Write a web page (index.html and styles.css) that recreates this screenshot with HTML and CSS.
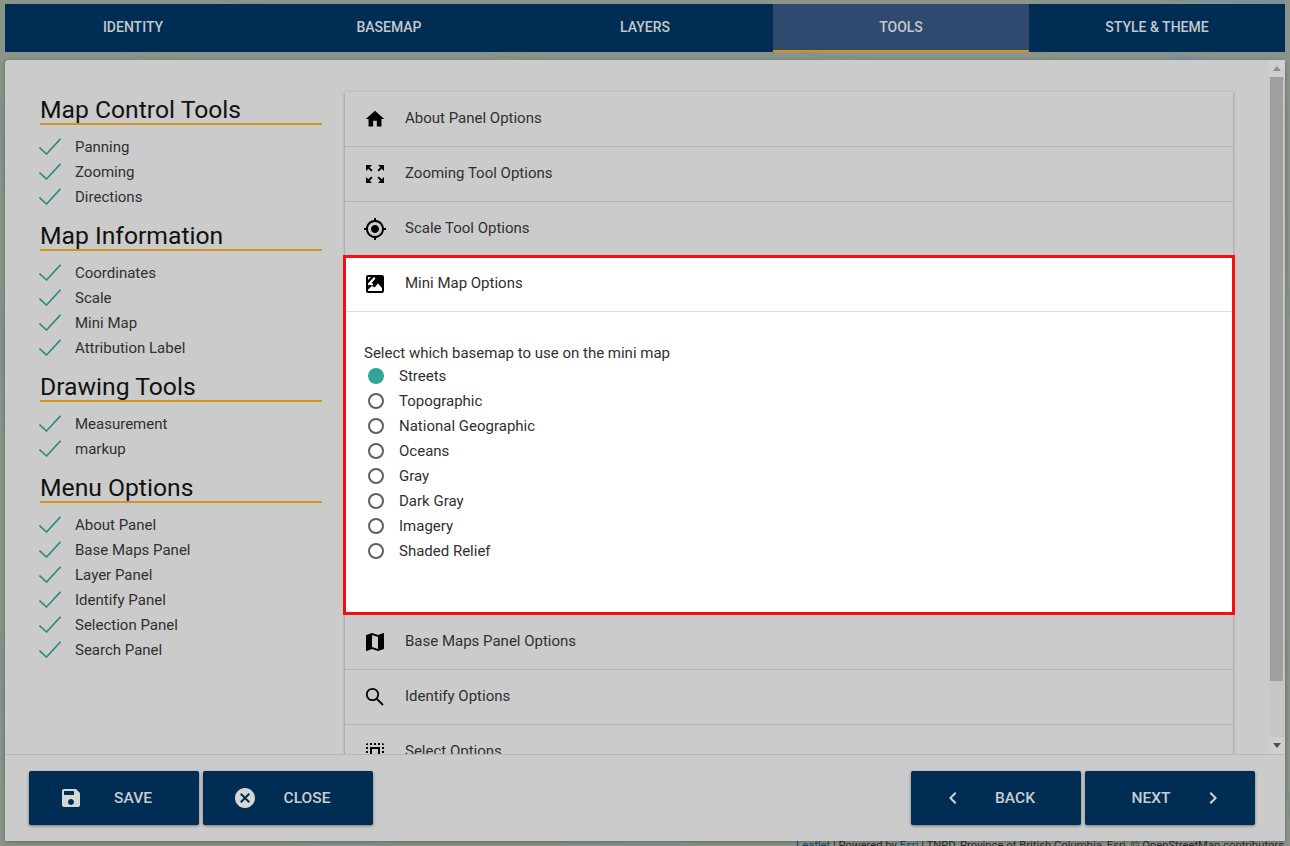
FILE: index.html
```html
<!DOCTYPE html>
<html lang="en">
<head>
  <meta charset="UTF-8">
  <meta name="viewport" content="width=device-width, initial-scale=1.0">
  <title>Map Wizard - Tools</title>
  <link rel="stylesheet" href="styles.css">
</head>
<body>
  <svg class="map-bg" viewBox="0 0 1290 846" aria-hidden="true">
    <g fill="none" stroke="#76928f" stroke-width="1">
      <path d="M0 95 C3 120 1 150 4 190"/>
      <path d="M0 290 C4 330 1 380 4 430"/>
      <path d="M0 630 C3 680 2 720 4 780"/>
      <path d="M220 0 C240 5 255 2 270 4"/>
      <path d="M120 52 C140 60 160 55 180 60"/>
      <path d="M480 52 C500 60 520 54 545 60"/>
      <path d="M800 52 C825 60 850 54 880 60"/>
      <path d="M1045 52 L1060 60"/>
      <path d="M1286 100 C1288 180 1285 260 1290 320"/>
      <path d="M1286 640 C1288 700 1285 760 1290 820"/>
      <path d="M300 842 C330 845 360 841 390 846"/>
      <path d="M560 842 C600 846 640 842 690 846"/>
    </g>
    <path d="M1160 0 C1200 3 1240 2 1285 4 L1285 0Z" fill="#7d8f9a"/>
    <path d="M1170 52 C1185 57 1200 56 1215 60 L1170 60Z" fill="#7d929c"/>
  </svg>

  <p class="attribution"><a>Leaflet</a> | Powered by <a>Esri</a> | TNRD, Province of British Columbia, Esri, © OpenStreetMap contributors</p>

  <div class="wizard">
    <nav class="tabs">
      <div class="tab">Identity</div>
      <div class="tab">Basemap</div>
      <div class="tab">Layers</div>
      <div class="tab active">Tools</div>
      <div class="tab">Style &amp; Theme</div>
    </nav>

    <div class="dialog">
      <div class="dialog-body">
        <div class="dialog-scroll">
          <aside class="summary">
            <h2>Map Control Tools</h2>
            <ul>
              <li><svg class="check" viewBox="0 0 22 17"><path d="M0.5 9.5 L7.5 16 L21.5 0.8"/></svg>Panning</li>
              <li><svg class="check" viewBox="0 0 22 17"><path d="M0.5 9.5 L7.5 16 L21.5 0.8"/></svg>Zooming</li>
              <li><svg class="check" viewBox="0 0 22 17"><path d="M0.5 9.5 L7.5 16 L21.5 0.8"/></svg>Directions</li>
            </ul>
            <h2>Map Information</h2>
            <ul>
              <li><svg class="check" viewBox="0 0 22 17"><path d="M0.5 9.5 L7.5 16 L21.5 0.8"/></svg>Coordinates</li>
              <li><svg class="check" viewBox="0 0 22 17"><path d="M0.5 9.5 L7.5 16 L21.5 0.8"/></svg>Scale</li>
              <li><svg class="check" viewBox="0 0 22 17"><path d="M0.5 9.5 L7.5 16 L21.5 0.8"/></svg>Mini Map</li>
              <li><svg class="check" viewBox="0 0 22 17"><path d="M0.5 9.5 L7.5 16 L21.5 0.8"/></svg>Attribution Label</li>
            </ul>
            <h2>Drawing Tools</h2>
            <ul>
              <li><svg class="check" viewBox="0 0 22 17"><path d="M0.5 9.5 L7.5 16 L21.5 0.8"/></svg>Measurement</li>
              <li><svg class="check" viewBox="0 0 22 17"><path d="M0.5 9.5 L7.5 16 L21.5 0.8"/></svg>markup</li>
            </ul>
            <h2>Menu Options</h2>
            <ul>
              <li><svg class="check" viewBox="0 0 22 17"><path d="M0.5 9.5 L7.5 16 L21.5 0.8"/></svg>About Panel</li>
              <li><svg class="check" viewBox="0 0 22 17"><path d="M0.5 9.5 L7.5 16 L21.5 0.8"/></svg>Base Maps Panel</li>
              <li><svg class="check" viewBox="0 0 22 17"><path d="M0.5 9.5 L7.5 16 L21.5 0.8"/></svg>Layer Panel</li>
              <li><svg class="check" viewBox="0 0 22 17"><path d="M0.5 9.5 L7.5 16 L21.5 0.8"/></svg>Identify Panel</li>
              <li><svg class="check" viewBox="0 0 22 17"><path d="M0.5 9.5 L7.5 16 L21.5 0.8"/></svg>Selection Panel</li>
              <li><svg class="check" viewBox="0 0 22 17"><path d="M0.5 9.5 L7.5 16 L21.5 0.8"/></svg>Search Panel</li>
            </ul>
          </aside>

          <section class="panels">
            <div class="panel">
              <div class="panel-head">
                <svg class="icon" viewBox="-1 -1 26 26"><path d="M10 20v-6h4v6h5v-8h3L12 3 2 12h3v8z"/></svg>
                About Panel Options
              </div>
            </div>
            <div class="panel">
              <div class="panel-head">
                <svg class="icon" viewBox="0 0 24 24"><path d="M15 3l2.3 2.3-2.89 2.87 1.42 1.42L18.7 6.7 21 9V3zM3 9l2.3-2.3 2.87 2.89 1.42-1.42L6.7 5.3 9 3H3zm6 12l-2.3-2.3 2.89-2.87-1.42-1.42L5.3 17.3 3 15v6zm12-6l-2.3 2.3-2.87-2.89-1.42 1.42 2.89 2.87L15 21h6z"/></svg>
                Zooming Tool Options
              </div>
            </div>
            <div class="panel">
              <div class="panel-head">
                <svg class="icon" viewBox="0 0 24 24"><path d="M12 8c-2.21 0-4 1.79-4 4s1.79 4 4 4 4-1.79 4-4-1.79-4-4-4zm8.94 3c-.46-4.17-3.77-7.48-7.94-7.94V1h-2v2.06C6.83 3.52 3.52 6.83 3.06 11H1v2h2.06c.46 4.17 3.77 7.48 7.94 7.94V23h2v-2.06c4.17-.46 7.48-3.77 7.94-7.94H23v-2h-2.06zM12 19c-3.87 0-7-3.13-7-7s3.13-7 7-7 7 3.13 7 7-3.13 7-7 7z"/></svg>
                Scale Tool Options
              </div>
            </div>

            <div class="panel open">
              <div class="panel-head">
                <svg class="icon" viewBox="0 0 24 24"><path d="M5 3h14c1.100 0 2 .9 2 2v14c0 1.100-.9 2-2 2H5c-1.100 0-2-.9-2-2V5c0-1.100.9-2 2-2z"/><path fill="#fff" d="M5 5h3L5 8zM5 11.500L11 5l1.500 1.500L8.500 11l2 1-1 1.500L6 12.800 5 13.800zM5 19v-1.500l4-3.500 2.500 1.500L15 11.500l4 4.500v3z"/></svg>
                Mini Map Options
              </div>
              <div class="panel-content">
                <p class="field-label">Select which basemap to use on the mini map</p>
                <div class="radio selected"><span class="dot"></span>Streets</div>
                <div class="radio"><span class="dot"></span>Topographic</div>
                <div class="radio"><span class="dot"></span>National Geographic</div>
                <div class="radio"><span class="dot"></span>Oceans</div>
                <div class="radio"><span class="dot"></span>Gray</div>
                <div class="radio"><span class="dot"></span>Dark Gray</div>
                <div class="radio"><span class="dot"></span>Imagery</div>
                <div class="radio"><span class="dot"></span>Shaded Relief</div>
              </div>
            </div>

            <div class="panel">
              <div class="panel-head">
                <svg class="icon" viewBox="0 0 24 24"><path d="M20.500 3l-.16.03L15 5.100 9 3 3.360 4.900c-.21.07-.36.25-.36.48V20.500c0 .28.22.5.5.5l.16-.03L9 18.900l6 2.100 5.640-1.900c.21-.07.36-.25.36-.48V3.500c0-.28-.22-.5-.5-.5zM15 19l-6-2.110V5l6 2.110V19z"/></svg>
                Base Maps Panel Options
              </div>
            </div>
            <div class="panel">
              <div class="panel-head">
                <svg class="icon search" viewBox="0 0 24 24"><circle cx="9.500" cy="9.500" r="5.700"/><path d="M13.800 13.800L20 20"/></svg>
                Identify Options
              </div>
            </div>
            <div class="panel">
              <div class="panel-head">
                <svg class="icon" viewBox="0 0 24 24"><path d="M3 5h2V3c-1.100 0-2 .9-2 2zm0 8h2v-2H3v2zm4 8h2v-2H7v2zM3 9h2V7H3v2zm10-6h-2v2h2V3zm6 0v2h2c0-1.100-.9-2-2-2zM5 21v-2H3c0 1.100.9 2 2 2zm-2-4h2v-2H3v2zM9 3H7v2h2V3zm2 18h2v-2h-2v2zm8-8h2v-2h-2v2zm0 8c1.100 0 2-.9 2-2h-2v2zm0-12h2V7h-2v2zm0 8h2v-2h-2v2zm-4 4h2v-2h-2v2zm0-16h2V3h-2v2zM7 17h10V7H7v10zm2-8h6v6H9V9z"/></svg>
                Select Options
              </div>
            </div>
          </section>
        </div>

        <div class="scrollbar">
          <span class="arrow up"></span>
          <div class="scroll-track"><div class="scroll-thumb"></div></div>
          <span class="arrow down"></span>
        </div>
      </div>

      <footer class="dialog-foot">
        <div class="btn-group">
          <button class="btn">
            <svg class="btn-icon" viewBox="0 0 24 24"><path d="M17 3H5c-1.110 0-2 .9-2 2v14c0 1.100.89 2 2 2h14c1.100 0 2-.9 2-2V7l-4-4zm-5 16c-1.660 0-3-1.340-3-3s1.340-3 3-3 3 1.340 3 3-1.340 3-3 3zm3-10H5V5h10v4z"/></svg>
            <span class="btn-text">Save</span>
          </button>
          <button class="btn">
            <svg class="btn-icon" viewBox="0 0 24 24"><path d="M12 2C6.470 2 2 6.470 2 12s4.470 10 10 10 10-4.470 10-10S17.530 2 12 2zm5 13.590L15.590 17 12 13.410 8.410 17 7 15.590 10.590 12 7 8.410 8.410 7 12 10.590 15.590 7 17 8.410 13.410 12 17 15.590z"/></svg>
            <span class="btn-text">Close</span>
          </button>
        </div>
        <div class="btn-group">
          <button class="btn">
            <svg class="btn-icon" viewBox="0 0 24 24"><path d="M15.410 7.410L14 6l-6 6 6 6 1.410-1.410L10.830 12z"/></svg>
            <span class="btn-text">Back</span>
          </button>
          <button class="btn reverse">
            <svg class="btn-icon" viewBox="0 0 24 24"><path d="M10 6L8.590 7.410 13.170 12l-4.580 4.590L10 18l6-6z"/></svg>
            <span class="btn-text">Next</span>
          </button>
        </div>
      </footer>
    </div>
  </div>
</body>
</html>
```

FILE: styles.css
```css
html, body {
  height: 100%;
}
body {
  margin: 0;
  overflow: hidden;
  position: relative;
  background-color: #8b9488;
  font-family: Roboto, "Liberation Sans", sans-serif;
  font-size: 15px;
  color: #303030;
}

.map-bg {
  position: absolute;
  top: 0;
  left: 0;
  width: 1290px;
  height: 846px;
}
.attribution {
  position: absolute;
  right: 6px;
  top: 839px;
  margin: 0;
  font-size: 11.25px;
  line-height: 14px;
  white-space: nowrap;
  color: #2b2b2b;
}
.attribution a {
  color: #0a4a70;
}

.wizard {
  position: relative;
  display: flex;
  flex-direction: column;
  gap: 8px;
  height: 837px;
  padding: 4px 5px 0;
}

/* top tabs */
.tabs {
  display: flex;
  flex: none;
  height: 48px;
  background: #002d53;
}
.tab {
  flex: 1;
  display: flex;
  align-items: center;
  justify-content: center;
  padding-bottom: 2px;
  font-size: 14px;
  font-weight: 500;
  text-transform: uppercase;
  color: #c4c9ce;
}
.tab.active {
  background: #30496f;
  box-shadow: inset 0 -2px 0 #d3921f;
}

/* dialog */
.dialog {
  flex: 1;
  min-height: 0;
  display: flex;
  flex-direction: column;
  background: #cbcbcb;
  border-radius: 4px 4px 0 0;
  box-shadow: 0 1px 4px rgba(0, 0, 0, 0.3);
}
.dialog-body {
  flex: 1;
  min-height: 0;
  display: flex;
}
.dialog-scroll {
  flex: 1;
  min-width: 0;
  display: flex;
  align-items: flex-start;
  gap: 23px;
  padding: 32px 36px 0 35px;
  overflow: hidden;
}

/* left summary */
.summary {
  flex: none;
  width: 282px;
}
.summary h2 {
  margin: 0 0 9px;
  padding-top: 4px;
  height: 27px;
  line-height: 28px;
  font-size: 24.7px;
  font-weight: 400;
  color: #111;
  border-bottom: 2px solid #d3921f;
  box-sizing: content-box;
}
.summary ul {
  list-style: none;
  margin: 0 0 9px;
  padding: 0;
}
.summary li {
  display: flex;
  align-items: center;
  height: 25px;
}
.check {
  flex: none;
  width: 22px;
  height: 17px;
  margin: 0 14px 0 -1px;
}
.check path {
  fill: none;
  stroke: #2a8a80;
  stroke-width: 1.6;
}

/* accordion */
.panels {
  flex: 1;
  min-width: 0;
  box-shadow: 0 1px 3px rgba(0, 0, 0, 0.35);
}
.panel {
  border-bottom: 1px solid #b4b4b4;
}
.panel-head {
  display: flex;
  align-items: center;
  gap: 18px;
  height: 54px;
  box-sizing: border-box;
  padding: 0 18px 2px;
}
.icon {
  flex: none;
  width: 24px;
  height: 24px;
  margin-top: 2px;
  fill: #000;
}
.icon.search {
  fill: none;
  stroke: #000;
  stroke-width: 1.8;
}
.panel.open {
  position: relative;
  margin-bottom: 2px;
  background: #fff;
  border-bottom: 0;
  outline: 3px solid #f5100f;
  outline-offset: -1px;
}
.panel.open .panel-head {
  height: 55px;
  border-bottom: 1px solid #dcdcdc;
}
.panel-content {
  height: 301px;
  padding: 32px 19px 0;
  box-sizing: border-box;
}
.field-label {
  margin: 0;
  height: 19px;
  line-height: 19px;
}
.radio {
  display: flex;
  align-items: center;
  height: 25px;
  gap: 15px;
}
.dot {
  flex: none;
  width: 16px;
  height: 16px;
  margin-left: 4px;
  border: 2px solid #5f5f5f;
  border-radius: 50%;
  box-sizing: border-box;
}
.radio.selected .dot {
  background: #30a597;
  border-color: #30a597;
}

/* fake scrollbar */
.scrollbar {
  flex: none;
  width: 16px;
  display: flex;
  flex-direction: column;
  align-items: center;
  background: #cfcfcf;
}
.arrow {
  flex: none;
  width: 0;
  height: 0;
  margin: 6px 0;
  border-left: 4px solid transparent;
  border-right: 4px solid transparent;
}
.arrow.up {
  border-bottom: 5px solid #8f8f8f;
}
.arrow.down {
  border-top: 5px solid #505050;
}
.scroll-track {
  flex: 1;
  width: 100%;
  background: #c6c6c6;
}
.scroll-thumb {
  width: 13px;
  height: 604px;
  margin-left: 1px;
  background: #a0a0a0;
}

/* footer buttons */
.dialog-foot {
  flex: none;
  height: 87px;
  box-sizing: border-box;
  display: flex;
  justify-content: space-between;
  padding: 16px 30px 16px 24px;
  border-top: 1px solid #b8b8b8;
}
.btn-group {
  display: flex;
  gap: 4px;
}
.btn {
  display: flex;
  align-items: center;
  width: 170px;
  height: 54px;
  padding: 0 16px 0 30px;
  border: 0;
  border-radius: 2px;
  background: #002d53;
  color: #c9cdd1;
  font-family: inherit;
  font-size: 15.5px;
  font-weight: 500;
  text-transform: uppercase;
  box-shadow: 0 1px 3px rgba(0, 0, 0, 0.45);
}
.btn.reverse {
  flex-direction: row-reverse;
  padding: 0 30px 0 16px;
}
.btn-icon {
  flex: none;
  width: 24px;
  height: 24px;
  fill: #d6d6d6;
}
.btn-text {
  flex: 1;
  text-align: center;
}
```
